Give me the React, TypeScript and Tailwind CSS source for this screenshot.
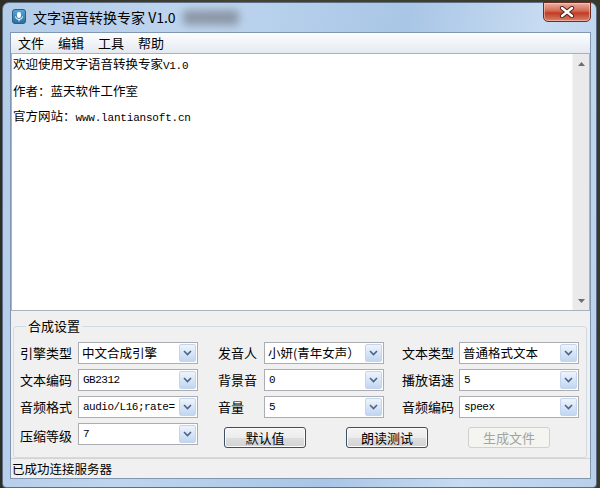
import React from 'react';

const CJK = "font-['Noto_Sans_CJK_SC','Noto_Sans',sans-serif]";
const MONO = "font-['Liberation_Mono','Noto_Sans_CJK_SC',monospace]";

function Chevron() {
  return (
    <svg width="9" height="6" viewBox="0 0 9 6">
      <polyline points="1,1 4.5,4.5 8,1" fill="none" stroke="#4d6386" strokeWidth="1.6" />
    </svg>
  );
}

function Combo({ value, mono }: { value: string; mono?: boolean }) {
  return (
    <div className="flex h-[22px] border border-[#abadb3] bg-white">
      <div
        className={
          mono
            ? `flex-1 overflow-hidden whitespace-nowrap pl-[4px] text-[11px] leading-[20px] tracking-[-0.5px] text-black ${MONO}`
            : `flex-1 overflow-hidden whitespace-nowrap pl-[3px] text-[12.5px] leading-[20px] text-black ${CJK}`
        }
      >
        {value}
      </div>
      <div className="my-px mr-px flex w-[17px] items-center justify-center rounded-[2px] border border-[#c3d4ec] bg-[linear-gradient(#eef4fc,#d7e5f7_50%,#c2d6f1)]">
        <Chevron />
      </div>
    </div>
  );
}

function Label({ text }: { text: string }) {
  return <div className={`flex items-center text-[13px] leading-[22px] text-black ${CJK}`}>{text}</div>;
}

function Btn({ text, disabled }: { text: string; disabled?: boolean }) {
  return (
    <div
      className={
        disabled
          ? `flex h-[21px] w-[82px] items-center justify-center rounded-[3px] border border-[#d0d1cc] bg-[#f4f4f0] text-[13px] text-[#a3a3a0] ${CJK}`
          : `flex h-[21px] w-[82px] items-center justify-center rounded-[3px] border border-[#3f4f63] bg-[linear-gradient(#f5f5f5,#ececec_50%,#dedede_50%,#d3d3d3)] text-[13px] text-black shadow-[inset_0_0_0_1px_#fbfbfb] ${CJK}`
      }
    >
      {text}
    </div>
  );
}

function AppIcon() {
  return (
    <svg width="14" height="15" viewBox="0 0 14 15">
      <defs>
        <linearGradient id="ig" x1="0" y1="0" x2="0" y2="1">
          <stop offset="0" stopColor="#5ba7d8" />
          <stop offset="1" stopColor="#2a6c9e" />
        </linearGradient>
      </defs>
      <rect x="0.5" y="0.5" width="13" height="14" rx="2.5" fill="url(#ig)" stroke="#2b5d85" />
      <rect x="5" y="3" width="4" height="6" rx="2" fill="#fff" />
      <path d="M3.5 7.5 Q3.5 10.5 7 10.5 Q10.5 10.5 10.5 7.5" fill="none" stroke="#fff" strokeWidth="1" />
      <line x1="7" y1="10.5" x2="7" y2="12.5" stroke="#fff" strokeWidth="1" />
    </svg>
  );
}

function CloseX() {
  return (
    <svg width="16" height="12" viewBox="0 0 16 12">
      <path d="M3 2 L13 10 M13 2 L3 10" stroke="#4a1e18" strokeWidth="4.2" strokeLinecap="round" />
      <path d="M3 2 L13 10 M13 2 L3 10" stroke="#ffffff" strokeWidth="2.4" strokeLinecap="round" />
    </svg>
  );
}

export default function App() {
  return (
    <div className="h-[488px] w-[600px] overflow-hidden bg-[linear-gradient(90deg,#2f2e26,#45432f_40%,#3a382a)] pl-[2px] pt-[2px]">
      <div className="flex h-[486px] w-[595px] flex-col rounded-t-[7px] rounded-b-[4px] border border-[#5b6f87] bg-[linear-gradient(100deg,#b3cce8_0%,#bed5ee_30%,#a9c6e6_60%,#c7dbf1_80%,#b8d0eb_100%)]">
        {/* title bar */}
        <div className="flex h-[29px]">
          <div className="ml-[9px] mt-[6px]">
            <AppIcon />
          </div>
          <div className={`ml-[7px] mt-[6px] text-[14px] leading-[17px] text-black ${CJK}`}>文字语音转换专家 V1.0</div>
          <div className="ml-[7px] mt-[7px] h-[15px] w-[56px] rounded bg-[#6a6e78] opacity-60 blur-[4px]" />
          <div className="-mt-px ml-auto mr-[5px] flex h-[20px] w-[48px] items-center justify-center rounded-b-[5px] border border-[#6a2d24] bg-[linear-gradient(#eab0a2,#d4664f_45%,#c13b25_55%,#d9826a)] shadow-[inset_0_0_0_1px_rgba(255,220,210,0.5)]">
            <CloseX />
          </div>
        </div>

        {/* client */}
        <div className="ml-[7px] mr-[5px] flex h-[447px] flex-col border border-[#8197b1] bg-[#f0f0f0]">
          {/* menu */}
          <div className={`flex h-[20px] bg-[linear-gradient(#fcfdfe,#eef2f7_60%,#e4e9f0)] text-[13px] leading-[20px] text-black ${CJK}`}>
            {['文件', '编辑', '工具', '帮助'].map((m) => (
              <div key={m} className="px-[7px]">
                {m}
              </div>
            ))}
          </div>

          {/* text area */}
          <div className="flex h-[260px] border border-[#a9b3bf] bg-white">
            <div className={`flex flex-1 flex-col gap-[11px] pl-[1px] pt-[3px] text-[12.5px] leading-[14px] text-black ${CJK}`}>
              <div>
                欢迎使用文字语音转换专家<span className={`text-[11px] tracking-[-0.3px] ${MONO}`}>V1.0</span>
              </div>
              <div>作者：蓝天软件工作室</div>
              <div>
                官方网站：<span className={`text-[11px] tracking-[-0.2px] ${MONO}`}>www.lantiansoft.cn</span>
              </div>
            </div>
            <div className="flex w-[17px] flex-col justify-between border-l border-[#f4f4f4] bg-[#eaeaea]">
              <div className="flex h-[17px] items-center justify-center pt-[2px]">
                <svg width="7" height="4" viewBox="0 0 7 4">
                  <polygon points="0,4 3.5,0 7,4" fill="#6d6d6d" />
                </svg>
              </div>
              <div className="flex h-[17px] items-center justify-center pb-[2px]">
                <svg width="7" height="4" viewBox="0 0 7 4">
                  <polygon points="0,0 3.5,4 7,0" fill="#6d6d6d" />
                </svg>
              </div>
            </div>
          </div>

          {/* group box */}
          <fieldset className="ml-[2px] mr-[3px] mt-[8px] rounded-[3px] border border-[#d2dbe1] pb-[9px] pl-[6px]">
            <legend className={`ml-[6px] px-[2px] text-[13px] leading-[14px] text-black ${CJK}`}>合成设置</legend>
            <div className="mt-[9px] grid grid-cols-[58px_120px_20px_46px_120px_18px_57px_120px] gap-y-[5px]">
              <Label text="引擎类型" />
              <Combo value="中文合成引擎" />
              <div />
              <Label text="发音人" />
              <Combo value="小妍(青年女声）" />
              <div />
              <Label text="文本类型" />
              <Combo value="普通格式文本" />

              <Label text="文本编码" />
              <Combo value="GB2312" mono />
              <div />
              <Label text="背景音" />
              <Combo value="0" mono />
              <div />
              <Label text="播放语速" />
              <Combo value="5" mono />

              <Label text="音频格式" />
              <Combo value="audio/L16;rate=" mono />
              <div />
              <Label text="音量" />
              <Combo value="5" mono />
              <div />
              <Label text="音频编码" />
              <Combo value="speex" mono />

              <Label text="压缩等级" />
              <Combo value="7" mono />
              <div className="col-span-6 flex gap-[40px] pl-[26px] pt-[4px]">
                <Btn text="默认值" />
                <Btn text="朗读测试" />
                <Btn text="生成文件" disabled />
              </div>
            </div>
          </fieldset>

          {/* status bar */}
          <div className={`mt-auto h-[20px] border-t border-[#d3d3d3] pl-[1px] text-[12.5px] leading-[19px] text-black ${CJK}`}>
            已成功连接服务器
          </div>
        </div>
      </div>
    </div>
  );
}
